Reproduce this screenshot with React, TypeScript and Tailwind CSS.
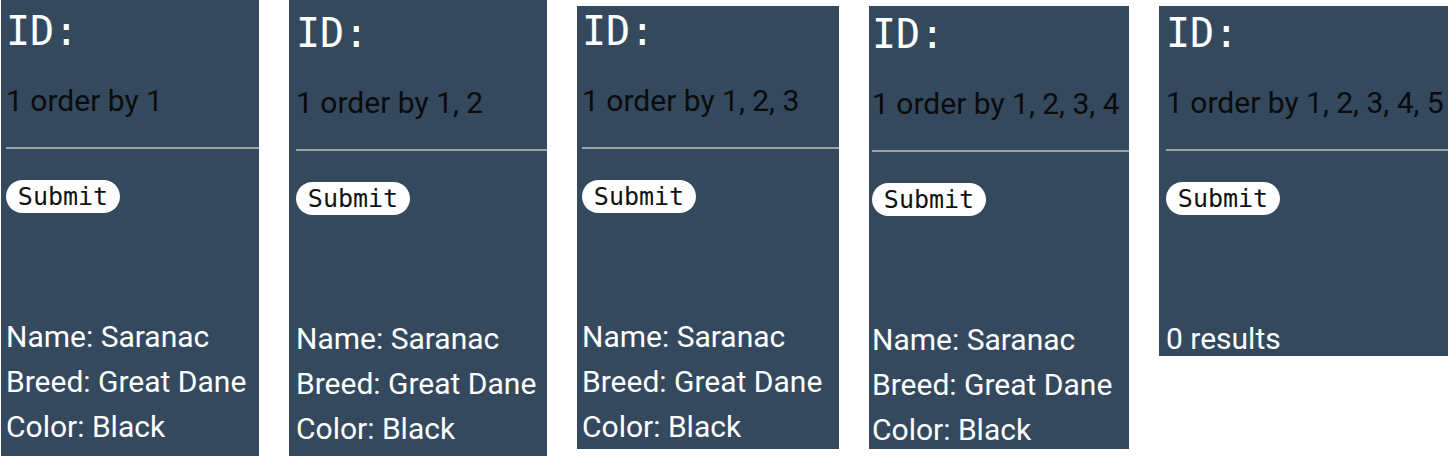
import React from "react";

const mono = "font-['DejaVu_Sans_Mono',monospace]";
const roboto = "font-['Roboto',sans-serif]";

type PanelProps = {
  outer: string;
  inner: string;
  order: string;
  lines: string[];
};

function Panel({ outer, inner, order, lines }: PanelProps) {
  return (
    <div className={`shrink-0 overflow-hidden bg-[#34495e] ${outer}`}>
      <div className={`flex flex-col ${inner}`}>
        <div className={`${mono} text-[40px] leading-[46px] text-white`}>ID:</div>
        <div className={`${roboto} mt-[24px] text-[30px] leading-[45px] text-[#0b0b0b] whitespace-nowrap`}>
          {order}
        </div>
        <div className="mt-[24px] h-[2px] bg-[#a2a2a2]" />
        <div className="mt-[31px]">
          <button
            className={`${mono} flex h-[33px] w-[114px] items-center justify-center rounded-full bg-white text-[25px] leading-[28px] text-[#111]`}
          >
            Submit
          </button>
        </div>
        <div className={`${roboto} mt-[101px] text-[30px] leading-[45px] text-white whitespace-nowrap`}>
          {lines.map((l) => (
            <div key={l}>{l}</div>
          ))}
        </div>
      </div>
    </div>
  );
}

const dog = ["Name: Saranac", "Breed: Great Dane", "Color: Black"];

export default function App() {
  return (
    <div className="flex h-[456px] w-[1448px] items-start gap-[30px] overflow-hidden bg-white pl-[1px]">
      <Panel outer="w-[258px] h-[470px]" inner="pt-[8px] pl-[5px]" order="1 order by 1" lines={dog} />
      <Panel outer="w-[258px] h-[470px]" inner="pt-[10px] pl-[7px]" order="1 order by 1, 2" lines={dog} />
      <Panel outer="w-[262px] h-[443px] mt-[6px]" inner="pt-[2px] pl-[5px]" order="1 order by 1, 2, 3" lines={dog} />
      <Panel outer="w-[260px] h-[443px] mt-[6px]" inner="pt-[5px] pl-[3px]" order="1 order by 1, 2, 3, 4" lines={dog} />
      <Panel outer="w-[300px] h-[350px] mt-[6px]" inner="pt-[4px] pl-[7px]" order="1 order by 1, 2, 3, 4, 5" lines={["0 results"]} />
    </div>
  );
}
